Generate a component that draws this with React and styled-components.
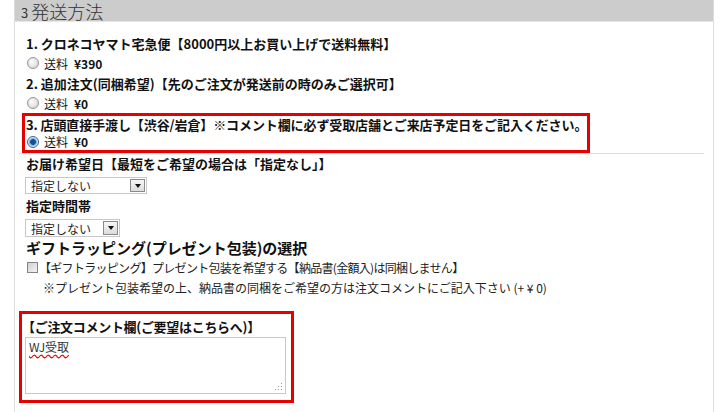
import React from "react";
import styled, { createGlobalStyle } from "styled-components";

const options = [
  {
    title: "1. クロネコヤマト宅急便【8000円以上お買い上げで送料無料】",
    price: "¥390",
  },
  {
    title: "2. 追加注文(同梱希望)【先のご注文が発送前の時のみご選択可】",
    price: "¥0",
  },
];

const App = () => {
  return (
    <>
      <GlobalStyle />
      <Panel>
        <Header>
          <StepNo>3</StepNo>
          <HeaderTitle>発送方法</HeaderTitle>
        </Header>
        <Body>
          {options.map((opt, i) => (
            <Option key={i}>
              <OptTitle>{opt.title}</OptTitle>
              <RadioRow>
                <Radio />
                <Fee>送料</Fee>
                <Price>{opt.price}</Price>
              </RadioRow>
            </Option>
          ))}
          <Highlight>
            <OptTitle $tight>
              3. 店頭直接手渡し【渋谷/岩倉】※コメント欄に必ず受取店舗とご来店予定日をご記入ください。
            </OptTitle>
            <RadioRow $short>
              <Radio $checked />
              <Fee>送料</Fee>
              <Price>¥0</Price>
            </RadioRow>
          </Highlight>
          <Divider />

          <FieldLabel>お届け希望日【最短をご希望の場合は「指定なし」】</FieldLabel>
          <Select $width={122}>
            <span>指定しない</span>
            <DropButton>
              <Caret />
            </DropButton>
          </Select>
          <FieldLabel $gap={3}>指定時間帯</FieldLabel>
          <Select $width={95} $height={18}>
            <span>指定しない</span>
            <DropButton>
              <Caret />
            </DropButton>
          </Select>

          <GiftTitle>ギフトラッピング(プレゼント包装)の選択</GiftTitle>
          <CheckRow>
            <Checkbox />
            <CheckText>
              【ギフトラッピング】プレゼント包装を希望する【納品書(金額入)は同梱しません】
            </CheckText>
          </CheckRow>
          <Note>
            ※プレゼント包装希望の上、納品書の同梱をご希望の方は注文コメントにご記入下さい (+ ¥ 0)
          </Note>

          <CommentBox>
            <CommentLabel>【ご注文コメント欄(ご要望はこちらへ)】</CommentLabel>
            <TextArea>
              <Misspelled>WJ受取</Misspelled>
              <Grip width="8" height="8" viewBox="0 0 8 8">
                <rect x="6" y="0" width="1" height="1" fill="#999" />
                <rect x="3" y="3" width="1" height="1" fill="#999" />
                <rect x="6" y="3" width="1" height="1" fill="#999" />
                <rect x="0" y="6" width="1" height="1" fill="#999" />
                <rect x="3" y="6" width="1" height="1" fill="#999" />
                <rect x="6" y="6" width="1" height="1" fill="#999" />
              </Grip>
            </TextArea>
          </CommentBox>
        </Body>
      </Panel>
    </>
  );
};

const GlobalStyle = createGlobalStyle`
  body {
    margin: 0;
    background: #fff;
    font-family: "Noto Sans CJK JP", "Liberation Sans", sans-serif;
    color: #111;
  }
`;

const Panel = styled.section`
  margin-left: 14px;
  width: 698px;
  min-height: 412px;
  border-left: 1px solid #dcdcdc;
  border-right: 1px solid #dcdcdc;
`;

const Header = styled.div`
  height: 21px;
  background: #cccccc;
  border-bottom: 1px solid #e6e6e6;
  display: flex;
  align-items: center;
  padding-left: 6px;
  color: #333;
`;

const StepNo = styled.span`
  font-size: 13px;
  line-height: 1;
  margin-right: 3px;
  margin-top: 3px;
`;

const HeaderTitle = styled.span`
  font-size: 18px;
  font-weight: 300;
  line-height: 1;
  margin-top: 1px;
`;

const Body = styled.div`
  padding: 13px 0 0 4px;
`;

const Option = styled.div`
  padding-left: 7px;
  & + & {
    margin-top: 2px;
  }
`;

const OptTitle = styled.div`
  font-size: 13px;
  font-weight: bold;
  line-height: ${(p) => (p.$tight ? 17 : 18)}px;
  white-space: nowrap;
  letter-spacing: ${(p) => (p.$tight ? "-0.1px" : "0")};
`;

const RadioRow = styled.div`
  display: flex;
  align-items: center;
  height: ${(p) => (p.$short ? 17 : 20)}px;
  font-size: 12px;
`;

const Radio = styled.span`
  width: 12px;
  height: 12px;
  box-sizing: border-box;
  border-radius: 50%;
  margin-left: 1px;
  margin-right: 5px;
  border: 1px solid ${(p) => (p.$checked ? "#3f6690" : "#939393")};
  background: ${(p) =>
    p.$checked
      ? "radial-gradient(circle at 50% 50%, #12508f 0 2.5px, #5a9ad6 3px, #d6e5f3 4.5px)"
      : "radial-gradient(circle at 40% 40%, #fdfdfd, #cfcfcf)"};
`;

const Fee = styled.span`
  margin-right: 6px;
`;

const Price = styled.span`
  font-weight: bold;
`;

const Highlight = styled.div`
  margin-left: 3px;
  width: 568px;
  box-sizing: border-box;
  border: 3px solid #e60000;
  padding-left: 1px;
`;

const Divider = styled.div`
  height: 0;
  border-top: 1px solid #dedede;
  margin-right: 9px;
`;

const FieldLabel = styled.div`
  padding-left: 7px;
  margin-top: ${(p) => p.$gap || 1}px;
  font-size: 13px;
  font-weight: bold;
  line-height: 18px;
  white-space: nowrap;
`;

const Select = styled.div`
  margin: 4px 0 0 6px;
  width: ${(p) => p.$width}px;
  height: ${(p) => p.$height || 17}px;
  box-sizing: border-box;
  border: 1px solid #c8c8c8;
  display: flex;
  align-items: center;
  justify-content: space-between;
  padding: 0 1px 0 5px;
  font-size: 12px;
  color: #222;
`;

const DropButton = styled.span`
  width: 15px;
  height: calc(100% - 2px);
  box-sizing: border-box;
  border: 1px solid #8a8a8a;
  background: linear-gradient(#f6f6f6, #dcdcdc);
  display: flex;
  align-items: center;
  justify-content: center;
`;

const Caret = styled.span`
  width: 0;
  height: 0;
  border-left: 3.5px solid transparent;
  border-right: 3.5px solid transparent;
  border-top: 4px solid #111;
`;

const GiftTitle = styled.div`
  padding-left: 7px;
  margin-top: 2px;
  font-size: 15px;
  font-weight: bold;
  line-height: 18px;
  white-space: nowrap;
`;

const CheckRow = styled.div`
  display: flex;
  align-items: center;
  height: 21px;
  padding-left: 8px;
`;

const Checkbox = styled.span`
  width: 11px;
  height: 11px;
  box-sizing: border-box;
  border: 1px solid #858585;
  background: linear-gradient(135deg, #cfcfcf, #f5f5f5);
  margin-right: 1px;
`;

const CheckText = styled.span`
  font-size: 12px;
  letter-spacing: -0.7px;
  white-space: nowrap;
  color: #222;
`;

const Note = styled.div`
  padding-left: 24px;
  font-size: 12px;
  line-height: 20px;
  white-space: nowrap;
  color: #222;
`;

const CommentBox = styled.div`
  margin-top: 13px;
  width: 275px;
  height: 92px;
  box-sizing: border-box;
  border: 3px solid #e60000;
  padding-top: 3px;
`;

const CommentLabel = styled.div`
  font-size: 13px;
  font-weight: bold;
  line-height: 20px;
  white-space: nowrap;
  letter-spacing: -0.3px;
`;

const TextArea = styled.div`
  position: relative;
  margin-left: 3px;
  width: 261px;
  height: 57px;
  box-sizing: border-box;
  border: 1px solid #c9c9c9;
  padding: 1px 3px;
  font-size: 12px;
  line-height: 16px;
  color: #333;
`;

const Misspelled = styled.span`
  text-decoration: underline wavy #e00000;
  text-underline-offset: 2px;
`;

const Grip = styled.svg`
  position: absolute;
  right: 2px;
  bottom: 2px;
`;

export default App;
